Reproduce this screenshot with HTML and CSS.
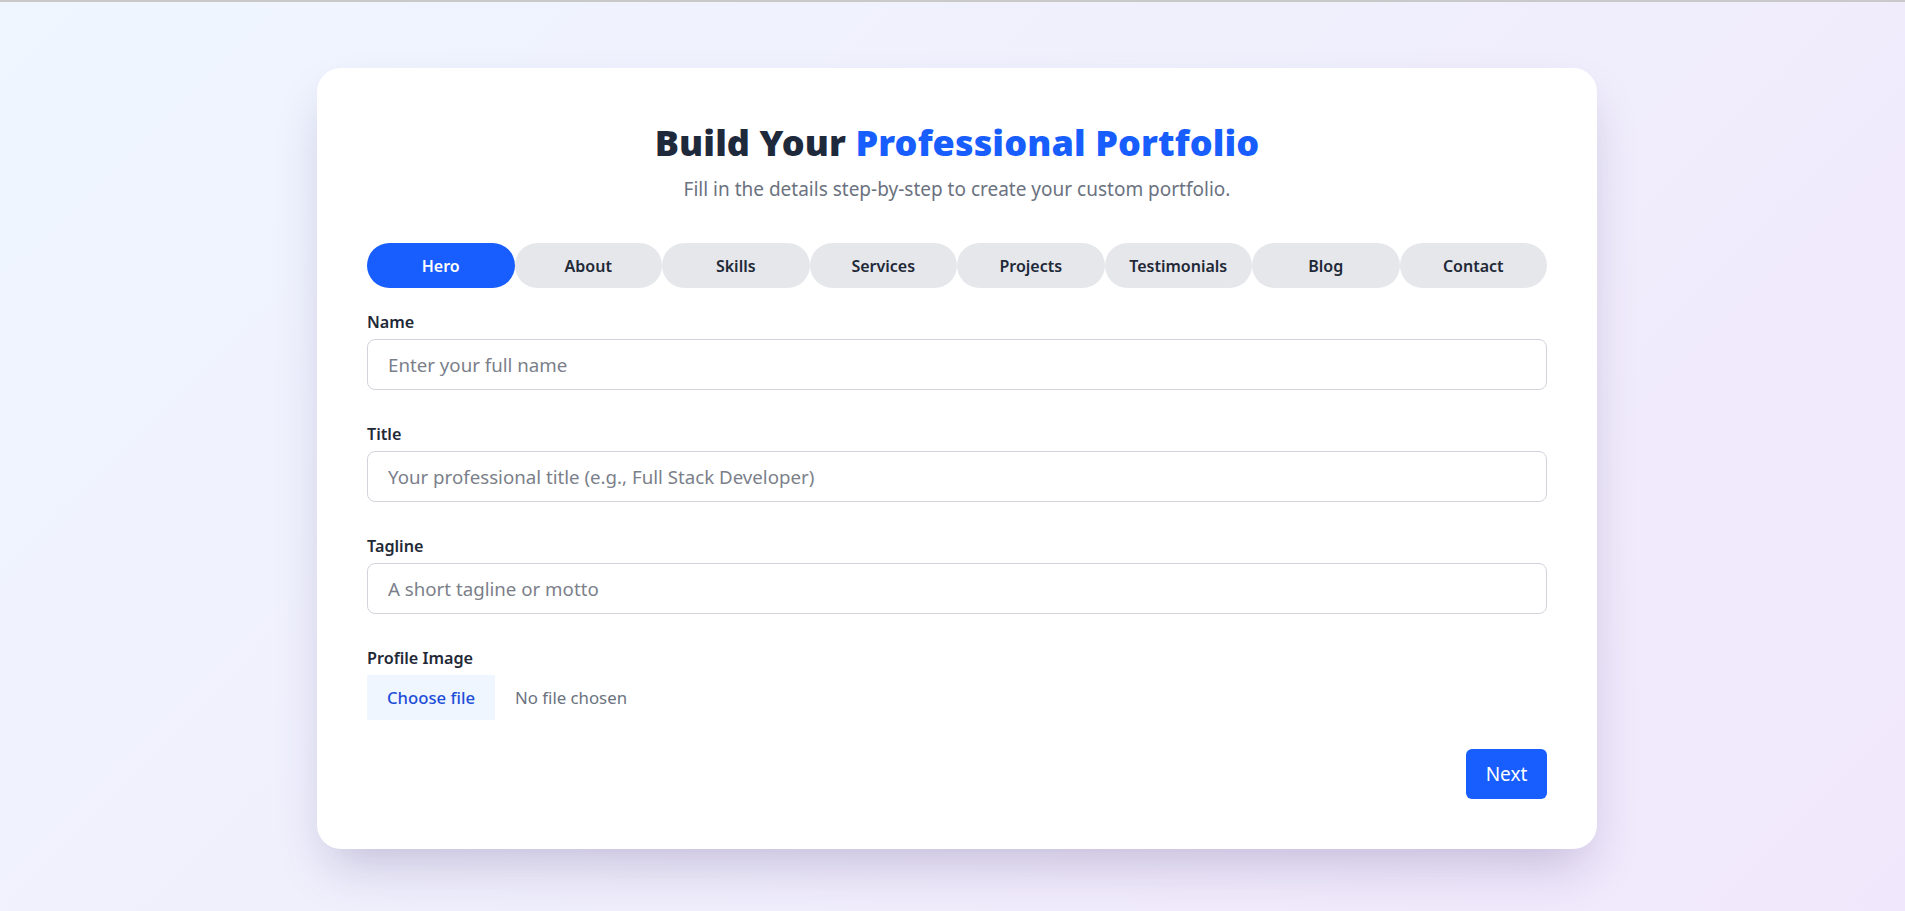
FILE: index.html
```html
<!DOCTYPE html>
<html lang="en">
<head>
<meta charset="utf-8">
<title>Portfolio Builder</title>
<link rel="stylesheet" href="styles.css">
</head>
<body>
<div class="topline"></div>
<main class="page">
  <section class="card">
    <header class="head">
      <h1 class="title">Build Your <span class="accent">Professional Portfolio</span></h1>
      <p class="subtitle">Fill in the details step-by-step to create your custom portfolio.</p>
    </header>
    <nav class="tabs">
      <button class="tab active">Hero</button>
      <button class="tab">About</button>
      <button class="tab">Skills</button>
      <button class="tab">Services</button>
      <button class="tab">Projects</button>
      <button class="tab">Testimonials</button>
      <button class="tab">Blog</button>
      <button class="tab">Contact</button>
    </nav>
    <form class="form">
      <div class="field">
        <label class="label">Name</label>
        <input class="input" type="text" placeholder="Enter your full name">
      </div>
      <div class="field">
        <label class="label">Title</label>
        <input class="input" type="text" placeholder="Your professional title (e.g., Full Stack Developer)">
      </div>
      <div class="field">
        <label class="label">Tagline</label>
        <input class="input" type="text" placeholder="A short tagline or motto">
      </div>
      <div class="field file-field">
        <label class="label">Profile Image</label>
        <div class="file">
          <span class="file-btn">Choose file</span>
          <span class="file-name">No file chosen</span>
        </div>
      </div>
      <div class="actions">
        <button type="button" class="next">Next</button>
      </div>
    </form>
  </section>
</main>
</body>
</html>
```
FILE: styles.css
```css
* { box-sizing: border-box; }
html, body { margin: 0; padding: 0; }
body {
  min-height: 911px;
  font-family: "Noto Sans", "Open Sans", sans-serif;
  background: linear-gradient(135deg, #eff6ff 0%, #f0eefc 55%, #f1e7fc 100%);
  color: #1f2937;
}
.topline { height: 2px; background: #c9c9c9; }
.page {
  display: flex;
  justify-content: center;
  padding: 66px 0 0 9px;
}
.card {
  width: 1280px;
  background: #fff;
  border-radius: 24px;
  padding: 55px 50px 50px;
  box-shadow: 0 25px 50px -12px rgba(60, 40, 110, 0.25);
}
.head { text-align: center; }
.title {
  margin: 0;
  font-family: "Noto Sans", sans-serif;
  font-weight: 900;
  font-size: 36px;
  line-height: 40px;
  letter-spacing: 0.1px;
  color: #1e293b;
}
.accent { color: #185dfe; }
.subtitle {
  margin: 12px 0 0;
  font-size: 19px;
  line-height: 28px;
  color: #6b7280;
}
.tabs {
  display: flex;
  margin-top: 40px;
}
.tab {
  flex: 1;
  height: 45px;
  border: 0;
  border-radius: 999px;
  background: #e5e7eb;
  color: #1f2937;
  font-family: "Noto Sans", sans-serif;
  font-size: 16px;
  font-weight: 600;
  padding: 0;
}
.tab.active { background: #185dfe; color: #fff; }
.form { margin-top: 22px; }
.field { margin-bottom: 32px; }
.label {
  display: block;
  font-size: 16.2px;
  line-height: 24px;
  font-weight: 600;
  color: #1f2937;
  margin-bottom: 5px;
}
.input {
  display: block;
  width: 100%;
  height: 51px;
  border: 1px solid #d1d5db;
  border-radius: 8px;
  padding: 0 20px;
  font-family: "Noto Sans", sans-serif;
  font-size: 18.7px;
  color: #1f2937;
  background: #fff;
  outline: none;
}
.input::placeholder { color: #7b7f8a; }
.file { display: flex; align-items: center; }
.file-btn {
  display: inline-flex;
  align-items: center;
  height: 45px;
  padding: 0 20px;
  background: #eff6ff;
  color: #1d4ed8;
  font-size: 16.7px;
  font-weight: 500;
}
.file-name {
  margin-left: 20px;
  font-size: 16.8px;
  color: #6b7280;
}
.file-field { margin-bottom: 29px; }
.actions { display: flex; justify-content: flex-end; }
.next {
  height: 50px;
  width: 81px;
  border: 0;
  border-radius: 6px;
  background: #185dfe;
  color: #fff;
  font-family: "Noto Sans", sans-serif;
  font-size: 19px;
  padding: 0;
}
```
